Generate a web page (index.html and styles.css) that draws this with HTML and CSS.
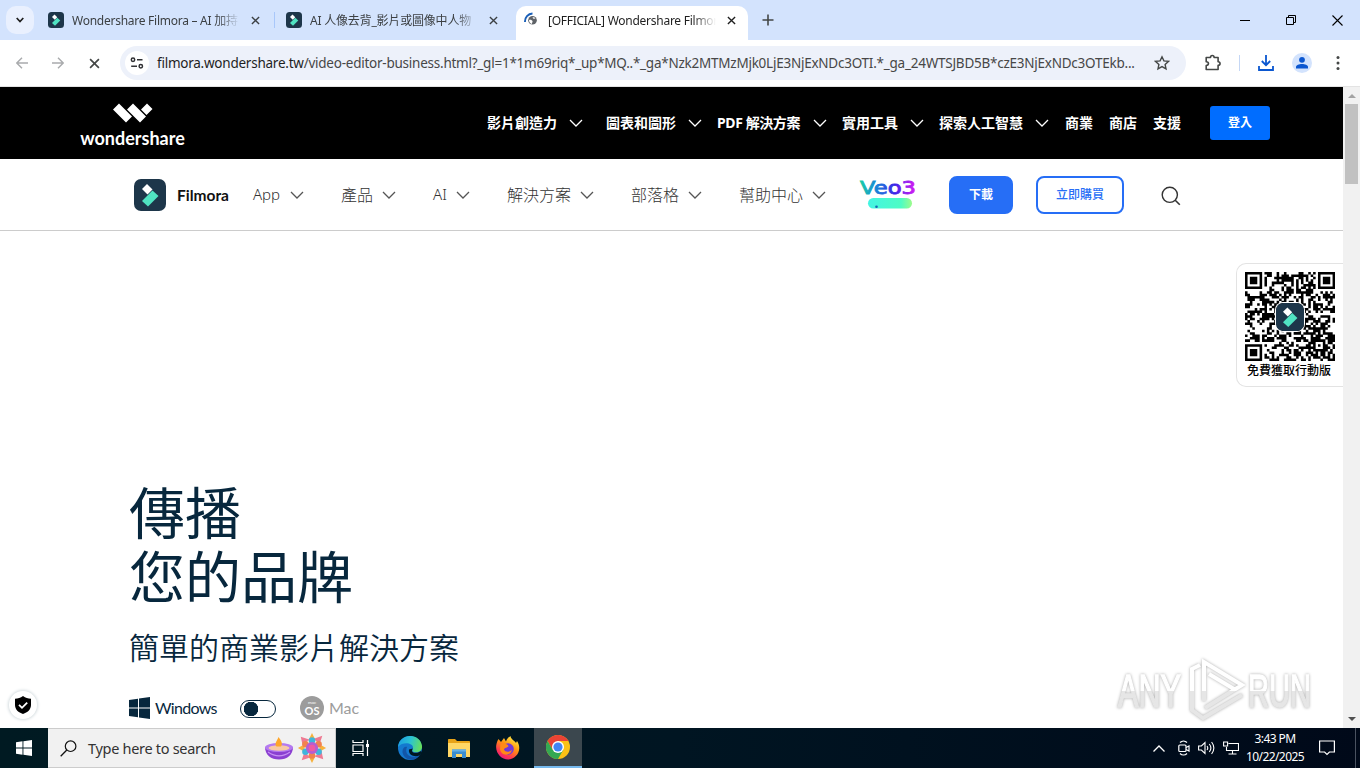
FILE: index.html
```html
<!DOCTYPE html>
<html lang="zh-Hant">
  <head>
    <meta charset="UTF-8" />
    <meta name="viewport" content="width=device-width, initial-scale=1.0" />
    <title>[OFFICIAL] Wondershare Filmora</title>
    <link rel="stylesheet" href="styles.css">
  </head>
  <body>
    <svg class="defs" width="0" height="0">
      <symbol id="filmora" viewBox="0 0 32 32">
        <rect width="32" height="32" rx="7" fill="#1d364a" />
        <path d="M13 5l5.500 5.500-5 5L8 10z" fill="#fff" />
        <path d="M18.500 11.500l6 5.500-10.500 10.500-6-5.500z" fill="#50e3c2" />
      </symbol>
      <symbol id="close" viewBox="0 0 10 10">
        <path d="M1 1l8 8M9 1l-8 8" fill="none" stroke="currentColor" stroke-width="1.500" />
      </symbol>
      <symbol id="chevron" viewBox="0 0 14 8">
        <path d="M1 1l6 6 6-6" fill="none" stroke="currentColor" stroke-width="1.300" />
      </symbol>
    </svg>

    <div class="tabstrip">
      <div class="tab-search">
        <svg width="8" height="6" viewBox="0 0 8 6"><path d="M.7 1L4 4.500 7.300 1" fill="none" stroke="#1f1f1f" stroke-width="1.700" /></svg>
      </div>
      <div class="tab">
        <svg class="tab-icon"><use href="#filmora" /></svg>
        <span class="tab-title tab-title-1">Wondershare Filmora – AI 加持</span>
        <svg class="tab-close"><use href="#close" /></svg>
      </div>
      <div class="tab tab-second">
        <svg class="tab-icon"><use href="#filmora" /></svg>
        <span class="tab-title tab-title-2">AI 人像去背_影片或圖像中人物</span>
        <svg class="tab-close"><use href="#close" /></svg>
      </div>
      <div class="tab tab-active">
        <svg class="tab-icon" viewBox="0 0 16 16">
          <path d="M1 10A8 8 0 0 1 8.500 1.500" fill="none" stroke="#1a5fb8" stroke-width="1.900" />
          <circle cx="8.500" cy="8.300" r="4.300" fill="#5f6368" />
          <path d="M5 8c2-.5 3 .3 3.500 1.200S7.500 11 8 12C6 11.500 5 10 5 8zM8.500 5.500c1-.6 2-.3 3 .8-1 .8-2.500.5-3-.8z" fill="#fff" />
        </svg>
        <span class="tab-title tab-title-3">[OFFICIAL] Wondershare Filmor</span>
        <svg class="tab-close"><use href="#close" /></svg>
      </div>
      <svg class="new-tab" width="12" height="12" viewBox="0 0 12 12"><path d="M6 .5v11M.5 6h11" stroke="#444746" stroke-width="1.600" /></svg>
      <div class="window-buttons">
        <svg width="10" height="10" viewBox="0 0 10 10"><path d="M0 5.500h10" stroke="#000" /></svg>
        <svg width="10" height="10" viewBox="0 0 10 10"><path d="M.5 2.500h7v7h-7zM2.500 2.500v-2h7v7h-2" fill="none" stroke="#000" /></svg>
        <svg width="11" height="11" viewBox="0 0 11 11"><path d="M.5.500l10 10M10.500.500l-10 10" stroke="#000" stroke-width="1.100" /></svg>
      </div>
    </div>

    <div class="toolbar">
      <div class="tool"><svg width="12" height="12" viewBox="0 0 12 12"><path d="M12 6H1M6 .7L.8 6 6 11.300" fill="none" stroke="#a9abad" stroke-width="1.400" /></svg></div>
      <div class="tool"><svg width="12" height="12" viewBox="0 0 12 12"><path d="M0 6h11M6 .7L11.200 6 6 11.300" fill="none" stroke="#a9abad" stroke-width="1.400" /></svg></div>
      <div class="tool tool-stop"><svg width="11" height="11"><use href="#close" /></svg></div>
      <div class="omnibox">
        <div class="site-info">
          <svg width="14" height="12" viewBox="0 0 14 12"><g fill="none" stroke="#303134" stroke-width="1.500"><circle cx="3" cy="2.800" r="1.700" /><path d="M7 2.800h5.500M1.200 9.200H7" /><circle cx="10.800" cy="9.200" r="1.700" /></g></svg>
        </div>
        <span class="url"><b>filmora.wondershare.tw</b>/video-editor-business.html?_gl=1*1m69riq*_up*MQ..*_ga*Nzk2MTMzMjk0LjE3NjExNDc3OTI.*_ga_24WTSJBD5B*czE3NjExNDc3OTEkb...</span>
        <svg class="star" width="16" height="16" viewBox="0 0 16 16"><path d="M8 1.800l1.900 4.100 4.500.5-3.300 3 .9 4.400L8 11.600l-4 2.200.9-4.400-3.300-3 4.500-.5z" fill="none" stroke="#444746" stroke-width="1.400" /></svg>
      </div>
      <div class="tool tool-ext"><svg width="18" height="18" viewBox="0 0 18 18"><path d="M2.200 3.500h4.300c0-2.700 3.600-2.700 3.600 0h4v4.200c2.600 0 2.600 3.600 0 3.600v4.200H2.200v-4c3-.2 3-3.600 0-3.800z" fill="none" stroke="#444746" stroke-width="1.600" stroke-linejoin="round" /></svg></div>
      <div class="tool-sep"></div>
      <div class="tool"><svg width="16" height="16" viewBox="0 0 16 16"><path d="M8 0v10M3.800 6L8 10.200 12.200 6M1 11v4h14v-4" fill="none" stroke="#0b57d0" stroke-width="1.800" /></svg></div>
      <div class="tool"><svg width="20" height="20" viewBox="0 0 20 20"><circle cx="10" cy="10" r="10" fill="#d3e3fd" /><circle cx="10" cy="6.800" r="2.900" fill="#0b57d0" /><path d="M4 15.500v-1.400c0-4 12-4 12 0v1.400z" fill="#0b57d0" /></svg></div>
      <div class="tool"><svg width="4" height="16" viewBox="0 0 4 16" fill="#444746"><circle cx="2" cy="2.500" r="1.500" /><circle cx="2" cy="8" r="1.500" /><circle cx="2" cy="13.500" r="1.500" /></svg></div>
    </div>

    <div class="viewport">
      <main class="page">
        <header class="ws-header">
          <a class="ws-logo">
            <svg width="40" height="20" viewBox="0 0 40 20" fill="#fff"><path d="M6 .5L19 13.500l-6 6L0 6.500zM20 .5L33 13.500l-6 6L14 6.500zM34 .5l5.500 5.500-6 6-5.500-5.500z" /></svg>
            <span>wondershare</span>
          </a>
          <nav class="ws-nav">
            <a>影片創造力<svg><use href="#chevron" /></svg></a>
            <a class="ws-nav-charts">圖表和圖形<svg><use href="#chevron" /></svg></a>
            <a><span class="pdf">PDF 解決方案</span><svg><use href="#chevron" /></svg></a>
            <a>實用工具<svg><use href="#chevron" /></svg></a>
            <a>探索人工智慧<svg><use href="#chevron" /></svg></a>
            <a>商業</a>
            <a>商店</a>
            <a>支援</a>
          </nav>
          <a class="login">登入</a>
        </header>

        <div class="product-bar">
          <a class="brand">
            <svg width="32" height="32"><use href="#filmora" /></svg>
            <span>Filmora</span>
          </a>
          <nav class="product-nav">
            <a><span class="nav-app">App</span><svg><use href="#chevron" /></svg></a>
            <a>產品<svg><use href="#chevron" /></svg></a>
            <a><span class="nav-ai">AI</span><svg><use href="#chevron" /></svg></a>
            <a>解決方案<svg><use href="#chevron" /></svg></a>
            <a>部落格<svg><use href="#chevron" /></svg></a>
            <a>幫助中心<svg><use href="#chevron" /></svg></a>
          </nav>
          <svg class="veo" width="58" height="30" viewBox="0 0 58 30">
            <defs>
              <linearGradient id="veo-text" x1="0" x2="58" y1="0" y2="0" gradientUnits="userSpaceOnUse"><stop offset="0" stop-color="#19d3a2" /><stop offset=".3" stop-color="#1784d8" /><stop offset=".62" stop-color="#3a22e8" /><stop offset="1" stop-color="#e51cf5" /></linearGradient>
              <linearGradient id="veo-pill"><stop offset="0" stop-color="#43f5e3" /><stop offset=".75" stop-color="#4dfcc4" /><stop offset="1" stop-color="#9dfb8b" /></linearGradient>
            </defs>
            <text x="1" y="14" textLength="56" lengthAdjust="spacingAndGlyphs" fill="url(#veo-text)" stroke="url(#veo-text)" stroke-width=".8">Veo3</text>
            <rect x="9" y="18" width="44" height="10.500" rx="5.200" fill="url(#veo-pill)" />
            <circle cx="17.500" cy="26.800" r="1.300" fill="#1665b5" />
          </svg>
          <a class="btn btn-download">下載</a>
          <a class="btn btn-buy">立即購買</a>
          <svg class="search" width="20" height="20" viewBox="0 0 20 20"><circle cx="8.800" cy="8.800" r="7.600" fill="none" stroke="#333" stroke-width="1.400" /><path d="M14.200 14.200l4.600 4.600" stroke="#333" stroke-width="1.600" /></svg>
        </div>

        <section class="hero">
          <h1>傳播<br>您的品牌</h1>
          <p>簡單的商業影片解決方案</p>
          <div class="platforms">
            <svg width="21" height="22" viewBox="0 0 21 22" fill="#07273d"><path d="M0 3l9-1.300v8.800H0zM10 1.500L21 0v10.500H10zM0 11.500h9v8.800L0 19zM10 11.500h11V22l-11-1.500z" /></svg>
            <span class="os-name">Windows</span>
            <span class="switch"></span>
            <svg width="24" height="24" viewBox="0 0 24 24"><circle cx="12" cy="12" r="12" fill="#9c9c9c" /><text x="12" y="8" font-size="4.500" text-anchor="middle" fill="#fff">mac</text><text x="12" y="18.500" font-size="11" font-weight="700" text-anchor="middle" fill="#fff">OS</text></svg>
            <span class="os-name os-mac">Mac</span>
          </div>
        </section>

        <aside class="qr-card">
          <div class="qr-code">
            <svg id="qr" width="90" height="89" viewBox="0 0 37 37" preserveAspectRatio="none"></svg>
            <svg class="qr-logo" width="28" height="28"><use href="#filmora" /></svg>
          </div>
          <span>免費獲取行動版</span>
        </aside>

        <div class="shield">
          <svg width="16" height="18" viewBox="0 0 16 18"><path d="M8 0c2.500 2 5 2.500 8 2.800V9c0 4.500-3.500 7.500-8 9-4.500-1.500-8-4.500-8-9V2.800C3 2.500 5.500 2 8 0z" fill="#000" /><path d="M4 8.800l3 3 5.200-5.200" fill="none" stroke="#fff" stroke-width="1.800" /></svg>
        </div>

        <svg class="watermark" width="204" height="74" viewBox="0 0 204 74">
          <defs>
            <linearGradient id="mark-fill" x1="0" x2="0" y1="0" y2="74" gradientUnits="userSpaceOnUse"><stop offset=".5" stop-color="#fff" /><stop offset=".5" stop-color="#e6e6e6" /></linearGradient>
          </defs>
          <g class="mark">
            <text x="5" y="53" textLength="63" lengthAdjust="spacingAndGlyphs">ANY</text>
            <text x="135" y="53" textLength="63" lengthAdjust="spacingAndGlyphs">RUN</text>
            <path d="M87 11l-8 4v41l11 8 39-23M91 47V8l38 23-37 23M96 20l25 15" />
          </g>
        </svg>
      </main>

      <div class="scrollbar">
        <svg width="8" height="4" viewBox="0 0 8 4"><path d="M0 4l4-4 4 4z" fill="#a3a3a3" /></svg>
        <div class="thumb"></div>
        <svg class="scroll-down" width="8" height="4" viewBox="0 0 8 4"><path d="M0 0l4 4 4-4z" fill="#505050" /></svg>
      </div>
    </div>

    <footer class="taskbar">
      <div class="start"><svg width="16" height="16" viewBox="0 0 16 16" fill="#fff"><path d="M0 2.200L6.500 1.300v6.200H0zM7.400 1.200L16 0v7.500H7.400zM0 8.400h6.500v6.300L0 13.800zM7.400 8.400H16V16l-8.600-1.200z" /></svg></div>
      <div class="search-box">
        <svg width="17" height="17" viewBox="0 0 17 17"><circle cx="10.600" cy="6.200" r="5.300" fill="none" stroke="#111" stroke-width="1.200" /><path d="M6.800 10L.7 16.200" stroke="#111" stroke-width="1.300" /></svg>
        <span>Type here to search</span>
        <svg class="diya" width="28" height="24" viewBox="0 0 28 24">
          <path d="M0 11c0 8 6 12.500 14 12.500S28 19 28 11z" fill="#8b3fd1" />
          <ellipse cx="14" cy="11.500" rx="14" ry="4.500" fill="#b47af0" />
          <ellipse cx="14" cy="12" rx="10.500" ry="2.800" fill="#f7c9a5" />
          <path d="M13.500 1c3 4 4.500 6.500 2.500 9.500h-4.500C9 7.500 12 5 13.500 1z" fill="#ffa629" />
          <path d="M3 16c7 5 15 5 22 0" fill="none" stroke="#c792f4" stroke-width="1.200" />
        </svg>
        <svg class="flower" width="30" height="32" viewBox="-16 -16 32 32">
          <g fill="#f7b23c"><path d="M-4-8L0-16l4 8zM-4 8L0 16l4-8zM8-4L15 0 8 4zM-8-4l-7 4 7 4z" fill="#f7b23c" /><path d="M2-10l9-3-3 9zM10 3l2 9-9-3zM-2 10l-9 3 3-9zM-10-3l-2-9 9 3z" fill="#ee7a92" /></g>
          <g fill="#3fb5dd"><circle cx="0" cy="-8" r="3.500" /><circle cx="7" cy="-4" r="3.500" fill="#f2824f" /><circle cx="7" cy="4" r="3.500" /><circle cx="0" cy="8" r="3.500" fill="#f2824f" /><circle cx="-7" cy="4" r="3.500" /><circle cx="-7" cy="-4" r="3.500" fill="#f2824f" /></g>
          <circle r="6.500" fill="#b85ed0" /><circle r="3.500" fill="#ef5aa4" />
        </svg>
      </div>
      <div class="task task-view"><svg width="18" height="16" viewBox="0 0 18 16"><g fill="none" stroke="#fff" stroke-width="1.200"><path d="M1 0v2.500h10V0M1 5h10v6.500H1zM1 16v-2.500h10V16M15.500 0v16" /></g><path d="M14 4h3v3h-3z" fill="#fff" /></svg></div>
      <div class="task">
        <svg width="24" height="24" viewBox="0 0 24 24">
          <defs><linearGradient id="edge" x1="0" x2="1" y1=".3" y2=".5"><stop offset="0" stop-color="#1b9de2" /><stop offset=".5" stop-color="#2bc3d2" /><stop offset="1" stop-color="#66df5c" /></linearGradient></defs>
          <circle cx="12" cy="12" r="12" fill="#1479cf" />
          <path d="M0 11C1-3 22-4 24 10c.5 5-4 7-8 6-2.500-.7-1.500-2-1-3.500C16 7 5 5 0 11z" fill="url(#edge)" />
          <path d="M9 11c-3 7 3 12.500 12.500 8.500C17 26 6.500 25 4.500 16.500 4 12.500 7 10 9 11z" fill="#1256a8" />
          <path d="M14.800 12.500c-1 2-1.500 3.500 1.500 4.200 2.500.5 5-.2 6.500-1.700l1 1.500-2.300 3c-5 2-11.500-.5-10.500-6z" fill="#001720" />
        </svg>
      </div>
      <div class="task">
        <svg width="22" height="19" viewBox="0 0 22 19"><path d="M0 1c0-.6.400-1 1-1h6l2 2h12c.6 0 1 .4 1 1v4H0z" fill="#e8a317" /><path d="M0 4h22v14H0z" fill="#ffd765" /><path d="M4 10.500h14V19h-4v-4H8v4H4z" fill="#3b8ed0" /><path d="M4 10.500h14v2H4z" fill="#64b1e8" /></svg>
      </div>
      <div class="task">
        <svg width="24" height="24" viewBox="0 0 24 24">
          <defs><linearGradient id="fox" x1=".8" x2=".2" y1="0" y2="1"><stop offset="0" stop-color="#fff44f" /><stop offset=".4" stop-color="#ff980e" /><stop offset=".75" stop-color="#ff3750" /><stop offset="1" stop-color="#e31587" /></linearGradient></defs>
          <path d="M2.500 3l2.500 3 3-4 2 3.500c1-3 3-4.500 4.500-5.500 0 3 4 4.500 5.500 7l1-2c6 9-1 18.500-9 18.500S-4 14 2.500 3z" fill="url(#fox)" />
          <circle cx="12" cy="13" r="5.800" fill="#7139d8" />
          <path d="M4.500 8c4-1 7 0 8 2-1 2-4 1.500-4.500 3.500 1 3 6 3 8 0-1 7-11 7-12-.5z" fill="#ff8a16" />
        </svg>
      </div>
      <div class="task task-active">
        <svg width="24" height="24" viewBox="0 0 24 24">
          <circle cx="12" cy="12" r="12" fill="#fbc116" />
          <path d="M1.600 6A12 12 0 0 1 22.400 6H12l-5.200 9z" fill="#ea4335" />
          <path d="M1.600 6A12 12 0 0 0 12 24l5.200-9H6.800z" fill="#34a853" />
          <circle cx="12" cy="12" r="6" fill="#fff" /><circle cx="12" cy="12" r="4.600" fill="#4285f4" />
        </svg>
      </div>
      <div class="tray">
        <svg width="12" height="7" viewBox="0 0 12 7"><path d="M.5 6.500L6 1l5.500 5.500" fill="none" stroke="#fff" stroke-width="1.300" /></svg>
        <svg width="12" height="16" viewBox="0 0 12 16"><g fill="none" stroke="#fff" stroke-width="1.200"><path d="M2 2.500c2-2 5-2 7 0M2 13.500c2 2 5 2 7 0" /><rect x=".8" y="5" width="7.200" height="6.500" rx="1" /><path d="M8 7.500L11 6v5L8 9.500" /></g></svg>
        <svg width="17" height="14" viewBox="0 0 17 14"><path d="M.6 5h2.800L7 1.500v11L3.400 9H.6zM9 5c1 1.300 1 2.700 0 4M11.300 3c2 2.500 2 5.500 0 8M13.600 1c3 4 3 8 0 12" fill="none" stroke="#fff" stroke-width="1.100" /></svg>
        <svg width="16" height="14" viewBox="0 0 16 14"><path d="M5.500 2.500h10v7H3.500V6M.6 1h4v4h-4zM9.500 9.500v3.500M5.500 13h8" fill="none" stroke="#fff" stroke-width="1.100" /></svg>
        <div class="clock"><span>3:43 PM</span><span>10/22/2025</span></div>
        <svg class="notify" width="16" height="16" viewBox="0 0 16 16"><path d="M.6 1h14.800v11h-5l-2.400 2.500L5.600 12h-5z" fill="none" stroke="#fff" stroke-width="1.200" /></svg>
        <i></i>
      </div>
    </footer>
    <script src="qr.js"></script>
  </body>
</html>
```
FILE: styles.css
```css
/* Estilos generales */
* {
  box-sizing: border-box;
}

body {
  margin: 0;
  width: 1360px;
  height: 768px;
  overflow: hidden;
  display: flex;
  flex-direction: column;
  font-family: "Noto Sans", "Noto Sans CJK TC", sans-serif;
  background: #fff;
}

svg {
  display: block;
  flex: none;
}

.defs {
  position: absolute;
}

/* Tabs */
.tabstrip {
  height: 40px;
  flex: none;
  display: flex;
  align-items: center;
  background: #d3e3fd;
  padding-left: 6px;
}

.tab-search {
  width: 28px;
  height: 28px;
  border-radius: 10px;
  background: #e9f0fe;
  display: flex;
  align-items: center;
  justify-content: center;
}

.tab {
  width: 238px;
  height: 34px;
  margin-top: 6px;
  padding: 0 0 6px 14px;
  display: flex;
  align-items: center;
  font-size: 12px;
  color: #3c4043;
}

.tab-second {
  background: linear-gradient(#a8c7fa, #a8c7fa) 2px 6px / 1px 16px no-repeat;
}

.tab-active {
  width: 232px;
  margin-left: 6px;
  padding-left: 8px;
  background: #fff;
  border-radius: 10px 10px 0 0;
  color: #1f1f1f;
}

.tab-icon {
  width: 16px;
  height: 16px;
}

.tab-title {
  flex: none;
  width: 168px;
  margin-left: 8px;
  white-space: nowrap;
  mask-image: linear-gradient(90deg, #000 145px, transparent 168px);
}

.tab-title-1 {
  letter-spacing: -0.26px;
}

.tab-title-2 {
  letter-spacing: -0.2px;
}

.tab-title-3 {
  letter-spacing: -0.26px;
}

.tab-close {
  width: 9px;
  height: 9px;
  margin-left: 11px;
}

.new-tab {
  margin-left: 14px;
}

.window-buttons {
  margin-left: auto;
  padding-right: 17px;
  display: flex;
  align-items: center;
  gap: 36px;
}

/* Barra de herramientas */
.toolbar {
  height: 47px;
  flex: none;
  padding: 0 4px;
  display: flex;
  align-items: center;
  background: #fff;
  border-bottom: 1px solid #e3e3e3;
}

.tool {
  flex: none;
  width: 36px;
  height: 36px;
  display: flex;
  align-items: center;
  justify-content: center;
}

.tool-stop {
  color: #444746;
}

.omnibox {
  flex: none;
  width: 1066px;
  height: 34px;
  margin-left: 8px;
  padding: 0 16px 0 5px;
  display: flex;
  align-items: center;
  background: #edf1fa;
  border-radius: 17px;
}

.site-info {
  flex: none;
  width: 24px;
  height: 24px;
  border-radius: 50%;
  background: #fff;
  display: flex;
  align-items: center;
  justify-content: center;
}

.url {
  margin-left: 8px;
  font-size: 13.5px;
  letter-spacing: -0.24px;
  white-space: nowrap;
  color: #474747;
}

.url b {
  font-weight: 400;
  color: #1f1f1f;
}

.star {
  margin-left: auto;
}

.tool-ext {
  margin-left: 9px;
}

.tool-sep {
  width: 1px;
  height: 16px;
  margin: 0 8px;
  background: #c5d7f5;
}

/* Contenido */
.viewport {
  height: 641px;
  flex: none;
  display: flex;
}

.page {
  position: relative;
  width: 1343px;
  overflow: hidden;
  background: #fff;
}

.ws-header {
  height: 72px;
  padding: 0 73px 0 80px;
  display: flex;
  align-items: center;
  background: #000;
  color: #fff;
}

.ws-logo {
  width: 105px;
  display: flex;
  flex-direction: column;
  align-items: center;
  gap: 3px;
  font: 700 18px/24px "Lato", sans-serif;
}

.ws-logo svg {
  margin-top: 6px;
}

.ws-nav {
  margin: -3px 0 0 302px;
  display: flex;
  gap: 16px;
  font-size: 14px;
  font-weight: 700;
  white-space: nowrap;
}

.ws-nav a {
  display: flex;
  align-items: center;
}

.ws-nav svg {
  width: 14px;
  height: 8px;
  margin: 2px 0 0 12px;
}

.ws-nav a + a {
  margin-left: -1px;
}

.ws-nav a.ws-nav-charts {
  margin-left: 7px;
}

.ws-nav a:nth-child(n + 6) {
  margin-left: 0;
}

.pdf {
  width: 84px;
  letter-spacing: -0.4px;
}

.login {
  width: 60px;
  height: 34px;
  margin-left: auto;
  border-radius: 3px;
  background: #006dff;
  font-size: 12px;
  font-weight: 700;
  line-height: 33px;
  text-align: center;
}

.product-bar {
  height: 72px;
  padding-left: 134px;
  display: flex;
  align-items: center;
  border-bottom: 1px solid #ccc;
}

.brand {
  width: 119px;
  display: flex;
  align-items: center;
  gap: 11px;
  font: 700 15.5px "Lato", sans-serif;
  color: #111;
}

.product-nav {
  display: flex;
  gap: 37px;
  margin-top: -2px;
  font-size: 16px;
  font-weight: 300;
  white-space: nowrap;
  color: #333;
}

.product-nav a {
  display: flex;
  align-items: center;
}

.product-nav svg {
  width: 14px;
  height: 8px;
  margin: 2px 0 0 9px;
  color: #555;
}

.nav-app {
  width: 28px;
  font-size: 15px;
}

.nav-ai {
  width: 14px;
  font-size: 15px;
}

.veo {
  margin-left: 33px;
  font: 400 17px "DejaVu Sans", sans-serif;
}

.btn {
  height: 38px;
  border-radius: 8px;
  border: 2px solid #266ef6;
  font-size: 12px;
  font-weight: 700;
  line-height: 34px;
  text-align: center;
}

.btn-download {
  width: 64px;
  margin-left: 32px;
  background: #266ef6;
  color: #fff;
}

.btn-buy {
  width: 88px;
  margin-left: 23px;
  color: #266ef6;
  font-weight: 500;
}

.search {
  margin-left: 37px;
  margin-top: 3px;
}

.hero {
  padding: 249px 0 0 129px;
  color: #07273d;
}

.hero h1 {
  margin: 0;
  font-size: 56px;
  font-weight: 400;
  line-height: 64px;
}

.hero p {
  margin: 18px 0 0;
  font-size: 30px;
  font-weight: 350;
  line-height: 44px;
}

.platforms {
  height: 30px;
  margin-top: 23px;
  display: flex;
  align-items: center;
  font-family: "Lato", sans-serif;
}

.os-name {
  width: 61px;
  margin: -2px 0 0 5px;
  font-size: 16px;
  letter-spacing: -0.7px;
}

.os-mac {
  color: #9c9c9c;
  letter-spacing: 0;
}

.switch {
  width: 36px;
  height: 18px;
  margin: 2px 24px 0;
  border: 1.5px solid #07273d;
  border-radius: 9px;
  background: radial-gradient(circle at 10px 50%, #07273d 7px, transparent 7.5px);
}

/* Elementos flotantes */
.qr-card {
  position: absolute;
  top: 176px;
  right: 0;
  width: 107px;
  height: 124px;
  padding: 8px 0 0 8px;
  border: 1px solid #e3e3e3;
  border-right: 0;
  border-radius: 10px 0 0 10px;
  background: #fff;
  font-size: 12px;
  font-weight: 500;
  line-height: 20px;
  color: #000;
}

.qr-card span {
  margin-left: 2px;
}

.qr-code {
  display: grid;
  width: 90px;
  place-items: center;
}

.qr-code svg {
  grid-area: 1 / 1;
}

.qr-logo {
  border-radius: 7px;
  box-shadow: 0 0 0 1px #fff;
}

.shield {
  position: absolute;
  left: 9px;
  top: 604px;
  width: 28px;
  height: 28px;
  border-radius: 50%;
  background: #fff;
  box-shadow: 0 0 3px 1px #d5dde0;
  display: flex;
  align-items: center;
  justify-content: center;
}

.watermark {
  position: absolute;
  left: 1113px;
  top: 567px;
}

.mark {
  font: 400 46px "Liberation Sans", sans-serif;
  fill: url(#mark-fill);
  stroke: url(#mark-fill);
  stroke-width: 1.5;
  filter: drop-shadow(0 0 1.5px #aaa);
}

.mark path {
  fill: none;
  stroke-width: 4;
}

.scrollbar {
  width: 17px;
  background: #f1f1f1;
  display: flex;
  flex-direction: column;
  align-items: center;
  padding: 7px 0;
}

.thumb {
  width: 13px;
  height: 80px;
  margin-top: 6px;
  background: #c1c1c1;
}

.scroll-down {
  margin-top: auto;
}

/* Barra de tareas */
.taskbar {
  height: 40px;
  display: flex;
  background: linear-gradient(90deg, #001a22, #001522 50%, #000919);
  color: #fff;
}

.start,
.task {
  width: 48px;
  display: flex;
  align-items: center;
  justify-content: center;
}

.task {
  width: 49px;
}

.search-box {
  width: 288px;
  padding-left: 12px;
  display: flex;
  align-items: center;
  background: #f1f1f1;
  border: 1px solid #ccc;
  border-left: 0;
  color: #333;
  font-size: 14.5px;
  letter-spacing: -0.3px;
}

.search-box span {
  width: 128px;
  margin-left: 11px;
  white-space: nowrap;
}

.diya {
  margin-left: 49px;
}

.flower {
  margin-left: 4px;
}

.task-view {
  width: 49px;
}

.task-active {
  width: 48px;
  margin-left: 2px;
  background: #3b474e;
  border-bottom: 2px solid #76b9ed;
}

.tray {
  margin-left: auto;
  display: flex;
  align-items: center;
}

.tray svg + svg {
  margin-left: 8px;
}

.tray svg:nth-child(2) {
  margin-left: 13px;
}

.clock {
  width: 60px;
  margin-left: 6px;
  display: flex;
  flex-direction: column;
  align-items: center;
  font-size: 12px;
  line-height: 18px;
  letter-spacing: -0.6px;
  white-space: nowrap;
}

.notify {
  margin-left: 14px;
}

.tray i {
  width: 1px;
  height: 40px;
  margin-left: 20px;
  margin-right: 4px;
  background: #4a5260;
}
```
FILE: qr.js
```js
const SIZE = 37;
const qr = document.getElementById("qr");
let seed = 20251;

function random() {
  seed = (seed * 16807) % 2147483647;
  return seed / 2147483647;
}

// finder patterns, null when the cell is outside of them
function finder(x, y) {
  const corners = [[0, 0], [SIZE - 7, 0], [0, SIZE - 7]];
  for (const [cx, cy] of corners) {
    const d = Math.max(Math.abs(x - cx - 3), Math.abs(y - cy - 3));
    if (d <= 4) return d === 3 || d <= 1;
  }
  const a = Math.max(Math.abs(x - 30), Math.abs(y - 30));
  if (a <= 2) return a !== 1;
  return null;
}

let d = "";
for (let y = 0; y < SIZE; y++) {
  for (let x = 0; x < SIZE; x++) {
    const fixed = finder(x, y);
    const dark = random() < 0.5;
    if (fixed === null ? dark : fixed) d += `M${x} ${y}h1.05v1.05h-1.05z`;
  }
}
const path = document.createElementNS("http://www.w3.org/2000/svg", "path");
path.setAttribute("d", d);
qr.appendChild(path);
```
